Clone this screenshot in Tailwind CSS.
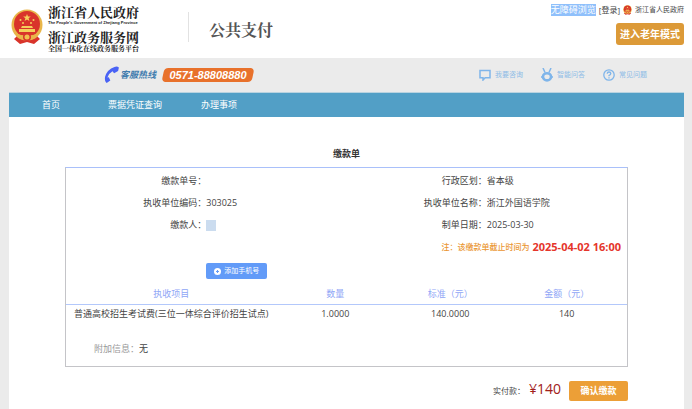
<!DOCTYPE html>
<html lang="zh-CN">
<head>
<meta charset="utf-8">
<meta name="viewport" content="width=device-width, initial-scale=1">
<title>公共支付</title>
<script src="https://cdn.jsdelivr.net/npm/@tailwindcss/browser@4"></script>
</head>
<body class="min-h-screen flex flex-col bg-[#ebebeb] text-[9px] leading-[12px] text-[#444] font-['Open_Sans','Noto_Sans_CJK_SC',sans-serif]">
<svg class="hidden">
  <symbol id="emblem" viewBox="0 0 32 36">
    <path d="M6 27 3 30l6 5 7-2 7 2 6-5-3-3z" fill="#d9342b"/>
    <circle cx="16" cy="16" r="15.500" fill="#e9b64a"/>
    <circle cx="16" cy="15" r="13" fill="#d9342b"/>
    <path d="m16 5 1 2.600h2.800l-2.200 1.700.8 2.700-2.400-1.600-2.400 1.600.8-2.700L12.200 7.600H15z" fill="#f5cf5b"/>
    <g fill="#f5cf5b"><circle cx="9.500" cy="11" r="1"/><circle cx="22.500" cy="11" r="1"/><circle cx="12" cy="14" r="1"/><circle cx="20" cy="14" r="1"/>
    <path d="M11 17h10l1 2H10zM8 20h16v3H8z"/></g>
    <path d="M4 24q12 5 24 0l-3 5q-9 4-18 0z" fill="#e9b64a"/>
    <circle cx="16" cy="28" r="4" fill="#d9342b"/><circle cx="16" cy="28" r="2.500" fill="#f0c050"/>
  </symbol>
</svg>
<header class="h-[58px] shrink-0 bg-white flex justify-between pl-[11px] pr-2">
  <div class="flex items-center">
    <svg class="w-8 h-9 mb-1" aria-hidden="true"><use href="#emblem"/></svg>
    <div class="ml-[5px] w-[94px] whitespace-nowrap text-[#222] font-['Liberation_Serif','Noto_Serif_CJK_SC','Noto_Sans_CJK_SC',serif]">
      <div class="text-[13px] leading-[14px] font-bold">浙江省人民政府</div>
      <div class="text-[4px] leading-[6px] font-bold font-['Liberation_Sans',sans-serif]">The People's Government of Zhejiang Province</div>
      <div class="mt-1 text-[13px] leading-[15px] font-bold">浙江政务服务网</div>
      <div class="text-[7px] leading-[8px] font-bold">全国一体化在线政务服务平台</div>
    </div>
    <div class="ml-[46px] w-px h-[30px] mb-1 bg-[#e2e2e2]"></div>
    <h1 class="ml-5 pt-1 text-[16px] leading-[20px] font-bold text-[#555] font-['Liberation_Serif','Noto_Serif_CJK_SC','Noto_Sans_CJK_SC',serif]">公共支付</h1>
  </div>
  <div class="flex flex-col items-end pt-1 gap-[7px] whitespace-nowrap">
    <div class="flex items-center text-[8px]">
      <a href="#" class="text-[9px] bg-[#8fc0fb] text-white">无障碍浏览</a>
      <a href="#" class="ml-[3px]">[登录]</a>
      <svg class="w-[9px] h-[10px] mx-[3px]" aria-hidden="true"><use href="#emblem"/></svg>
      <a href="#" class="text-[7px]">浙江省人民政府</a>
    </div>
    <button type="button" class="h-[22px] w-[68px] rounded-[3px] bg-[#dc9a38] text-white text-[10px] font-bold">进入老年模式</button>
  </div>
</header>
<div class="h-[34px] shrink-0 flex items-center justify-between pl-[104px] pr-[45px]">
  <div class="flex items-center">
    <svg class="w-4 h-[18px]" viewBox="0 0 16 18" aria-hidden="true"><path d="M10.500 1Q3 3.500 1 11q-.6 4.500 1.700 6l3.600-2.500-1.500-3.300-1.400.2Q4.500 7.500 8.500 5.200l1.600 2 4-2.200.8-3.500Q13 0 10.500 1z" fill="#4a63f5"/></svg>
    <span class="text-[#3f7cae] font-bold italic">客服热线</span>
    <span class="ml-[7px] h-[14px] w-[90px] flex items-center justify-center relative">
      <span class="absolute inset-0 -skew-x-12 rounded-[4px] bg-[#e8712b]"></span>
      <span class="relative text-[11px] text-white font-bold italic font-['Liberation_Sans',sans-serif]">0571-88808880</span>
    </span>
  </div>
  <nav class="flex items-center gap-[18px] text-[7px] text-[#8dbbe6]">
    <a href="#" class="flex items-center gap-1"><svg class="w-3 h-3" viewBox="0 0 12 12" fill="none" stroke="#7fb5ea" stroke-width="1.500" aria-hidden="true"><path d="M1 1.500h10v7.200H6.200L4 11V8.700H1z"/></svg>我要咨询</a>
    <a href="#" class="flex items-center gap-1"><svg class="w-3 h-[14px]" viewBox="0 0 12 14" fill="none" stroke="#7fb5ea" stroke-width="1.500" aria-hidden="true"><path d="m2 0 2 4.500m6-4.500-2 4.500M0 9h2m8 0h2"/><ellipse cx="6" cy="8.800" rx="4" ry="3.600" stroke-width="2.600"/></svg>智能问答</a>
    <a href="#" class="flex items-center gap-1"><svg class="w-3 h-3" viewBox="0 0 12 12" fill="none" stroke="#7fb5ea" stroke-width="1.300" aria-hidden="true"><circle cx="6" cy="6" r="5.200"/><path d="M4.200 4.800Q4.300 3 6 3t1.800 1.600Q7.700 5.500 6 6.500v.8M6 8.300v1.200"/></svg>常见问题</a>
  </nav>
</div>
<div class="grow flex flex-col ml-[9px] mr-2 bg-white">
  <nav class="h-[25px] bg-[#529fc6] border-t border-[#b9d3e0] text-white flex items-center gap-x-[39px] pl-[33px]">
    <a href="#" class="w-[27px]">首页</a>
    <a href="#" class="whitespace-nowrap">票据凭证查询</a>
    <a href="#">办理事项</a>
  </nav>
  <main class="px-14 pt-[31px] pb-2">
    <h2 class="text-center font-bold text-[#333]">缴款单</h2>
    <section class="mt-[7px] border border-x-[#c4c4c8] border-b-[#c4c4c8] border-t-[#a9c0fa] h-[200px]">
      <dl class="pt-[2px] grid grid-cols-4 auto-rows-[22px] items-center whitespace-nowrap">
        <dt class="text-right">缴款单号：</dt><dd></dd>
        <dt class="text-right">行政区划：</dt><dd>省本级</dd>
        <dt class="text-right">执收单位编码：</dt><dd>303025</dd>
        <dt class="text-right">执收单位名称：</dt><dd>浙江外国语学院</dd>
        <dt class="text-right">缴款人：</dt><dd><span class="block w-[10px] h-[11px] bg-[#cbdcef]"></span></dd>
        <dt class="text-right">制单日期：</dt><dd>2025-03-30</dd>
      </dl>
      <p class="h-[22px] flex items-center justify-end gap-[3px] pr-[6px] text-[#ea9530] font-medium text-[8px] whitespace-nowrap">注：该缴款单截止时间为<strong class="text-[11px] text-[#e5352b]">2025-04-02 16:00</strong></p>
      <button type="button" class="mt-[5px] ml-[25%] w-[61px] h-4 rounded-[2px] bg-[#629bf8] text-white text-[7px] flex items-center justify-center gap-[3px]">
        <svg class="w-[7px] h-[7px]" viewBox="0 0 8 8" aria-hidden="true"><circle cx="4" cy="4" r="4" fill="#fff"/><path d="M4 2.300v3.400M2.300 4h3.400" stroke="#629bf8" stroke-width="1.200"/></svg>添加手机号</button>
      <table class="mt-[5px] w-full table-fixed text-center whitespace-nowrap">
        <thead class="text-[#8fa6f6] border-b border-[#b3c8fb]">
          <tr class="h-5"><th scope="col" class="w-3/8 font-normal">执收项目</th><th scope="col" class="w-[21%] font-normal">数量</th><th scope="col" class="w-1/5 font-normal">标准（元）</th><th scope="col" class="font-normal">金额（元）</th></tr>
        </thead>
        <tbody><tr class="h-5"><td>普通高校招生考试费(三位一体综合评价招生试点)</td><td>1.0000</td><td>140.0000</td><td>140</td></tr></tbody>
      </table>
      <p class="mt-[19px] pl-7"><span class="text-[#999]">附加信息：</span>无</p>
    </section>
    <div class="mt-[14px] flex items-center justify-end">
      <span class="text-[8px]">实付款：</span>
      <span class="ml-1 pb-1 text-[14px] leading-[16px] text-[#a0201a]">¥140</span>
      <button type="button" class="ml-2 w-[59px] h-5 rounded-[2px] bg-[#ec9f37] text-white text-[9px] font-bold">确认缴款</button>
    </div>
  </main>
</div>
</body>
</html>
